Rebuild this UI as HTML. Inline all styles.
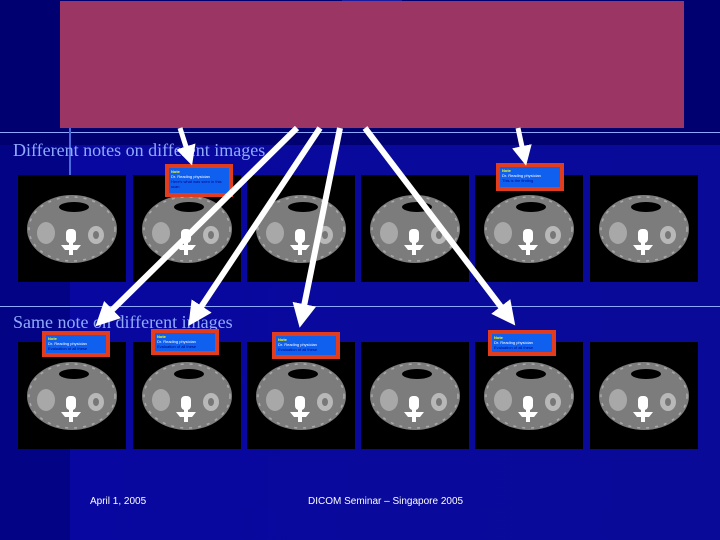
<!DOCTYPE html>
<html><head><meta charset="utf-8"><style>
body{margin:0;width:720px;height:540px;overflow:hidden;position:relative;background:#0a0a98;font-family:"Liberation Sans",sans-serif}
.abs{position:absolute}
.note{position:absolute;background:#e23c1e;padding:4px}
.note div.in{background:#1060f0;width:100%;height:100%;position:relative;font-size:4px;line-height:5px;color:#fff;padding:1px 2px;box-sizing:border-box}
.y{color:#ff0;font-weight:bold}
.d{color:#00008a}
.t{font-family:"Liberation Serif",serif;font-size:18px;color:#90aaff;position:absolute}
.img{position:absolute;width:108px;height:107px;background:#000}
</style></head><body>
<div class="abs" style="left:0;top:0;width:720px;height:145px;background:#000070"></div>
<div class="abs" style="left:0;top:145px;width:70px;height:395px;background:#030385"></div>
<div class="abs" style="left:70px;top:145px;width:650px;height:395px;background:linear-gradient(90deg,#0808a0,#0a0a98)"></div>
<div class="abs" style="left:342px;top:0;width:60px;height:3px;background:#1a1aa0"></div>
<div class="abs" style="left:60px;top:1px;width:624px;height:127px;background:#9b3564"></div>
<div class="abs" style="left:0;top:132px;width:720px;height:1px;background:#8fa8ff"></div>
<div class="abs" style="left:0;top:306px;width:720px;height:1px;background:#8fa8ff"></div>
<div class="abs" style="left:69px;top:128px;width:2px;height:110px;background:#4a6ae0"></div>
<div class="t" style="left:13px;top:140px">Different notes on different images</div>
<div class="t" style="left:13px;top:312px">Same note on different images</div>

<svg width="0" height="0" style="position:absolute"><defs>
<g id="ct">
<ellipse cx="54" cy="54" rx="45" ry="34" fill="#7c7c7c"/>
<ellipse cx="54" cy="54" rx="43" ry="32" fill="none" stroke="#aaa" stroke-width="1.5" stroke-dasharray="3 6"/>
<ellipse cx="56" cy="32" rx="15" ry="5" fill="#000"/>
<ellipse cx="28" cy="58" rx="9" ry="11" fill="#a8a8a8"/>
<ellipse cx="78" cy="60" rx="8" ry="9" fill="#b8b8b8"/>
<ellipse cx="78" cy="60" rx="3" ry="4" fill="#777"/>
<rect x="48" y="54" width="10" height="14" rx="4" fill="#fff"/>
<rect x="51" y="66" width="4" height="14" fill="#fff"/>
<path d="M43 70 L63 70 L59 75 L47 75Z" fill="#fff"/>
</g></defs></svg>

<div class="img" style="left:18px;top:175px"><svg width="108" height="107"><use href="#ct"/></svg></div>
<div class="img" style="left:133px;top:175px"><svg width="108" height="107"><use href="#ct"/></svg></div>
<div class="img" style="left:247px;top:175px"><svg width="108" height="107"><use href="#ct"/></svg></div>
<div class="img" style="left:361px;top:175px"><svg width="108" height="107"><use href="#ct"/></svg></div>
<div class="img" style="left:475px;top:175px"><svg width="108" height="107"><use href="#ct"/></svg></div>
<div class="img" style="left:590px;top:175px"><svg width="108" height="107"><use href="#ct"/></svg></div>

<div class="img" style="left:18px;top:342px"><svg width="108" height="107"><use href="#ct"/></svg></div>
<div class="img" style="left:133px;top:342px"><svg width="108" height="107"><use href="#ct"/></svg></div>
<div class="img" style="left:247px;top:342px"><svg width="108" height="107"><use href="#ct"/></svg></div>
<div class="img" style="left:361px;top:342px"><svg width="108" height="107"><use href="#ct"/></svg></div>
<div class="img" style="left:475px;top:342px"><svg width="108" height="107"><use href="#ct"/></svg></div>
<div class="img" style="left:590px;top:342px"><svg width="108" height="107"><use href="#ct"/></svg></div>

<div class="note" style="left:165px;top:164px;width:60px;height:25px"><div class="in"><div class="y">Note</div>Dr. Reading physician<div class="d">Here's what was seen in this scan</div></div></div>
<div class="note" style="left:496px;top:163px;width:60px;height:20px"><div class="in"><div class="y">Note</div>Dr. Reading physician<div class="d">This is the finding</div></div></div>
<div class="note" style="left:42px;top:331px;width:60px;height:18px"><div class="in"><div class="y">Note</div>Dr. Reading physician<div class="d">Evaluation of all these</div></div></div>
<div class="note" style="left:151px;top:329px;width:60px;height:18px"><div class="in"><div class="y">Note</div>Dr. Reading physician<div class="d">Evaluation of all these</div></div></div>
<div class="note" style="left:272px;top:332px;width:60px;height:19px"><div class="in"><div class="y">Note</div>Dr. Reading physician<div class="d">Evaluation of all these</div></div></div>
<div class="note" style="left:488px;top:330px;width:60px;height:18px"><div class="in"><div class="y">Note</div>Dr. Reading physician<div class="d">Evaluation of all these</div></div></div>

<svg class="abs" style="left:0;top:0" width="720" height="540">
<defs><marker id="ah" markerWidth="4" markerHeight="4" refX="2" refY="2" orient="auto" markerUnits="strokeWidth"><path d="M0,0 L4,2 L0,4Z" fill="#fff"/></marker></defs>
<g stroke="#fff" stroke-width="6" fill="none">
<line x1="180" y1="128" x2="189" y2="156" marker-end="url(#ah)" stroke-width="5"/>
<line x1="518" y1="128" x2="524" y2="156" marker-end="url(#ah)" stroke-width="5"/>
<line x1="297" y1="128" x2="104" y2="318" marker-end="url(#ah)"/>
<line x1="320" y1="128" x2="195" y2="316" marker-end="url(#ah)"/>
<line x1="340" y1="128" x2="302" y2="316" marker-end="url(#ah)"/>
<line x1="365" y1="128" x2="508" y2="316" marker-end="url(#ah)"/>
</g></svg>

<div class="abs" style="left:90px;top:496px;font-size:10px;color:#fff">April 1, 2005</div>
<div class="abs" style="left:308px;top:496px;font-size:10px;color:#fff">DICOM Seminar – Singapore 2005</div>
</body></html>
